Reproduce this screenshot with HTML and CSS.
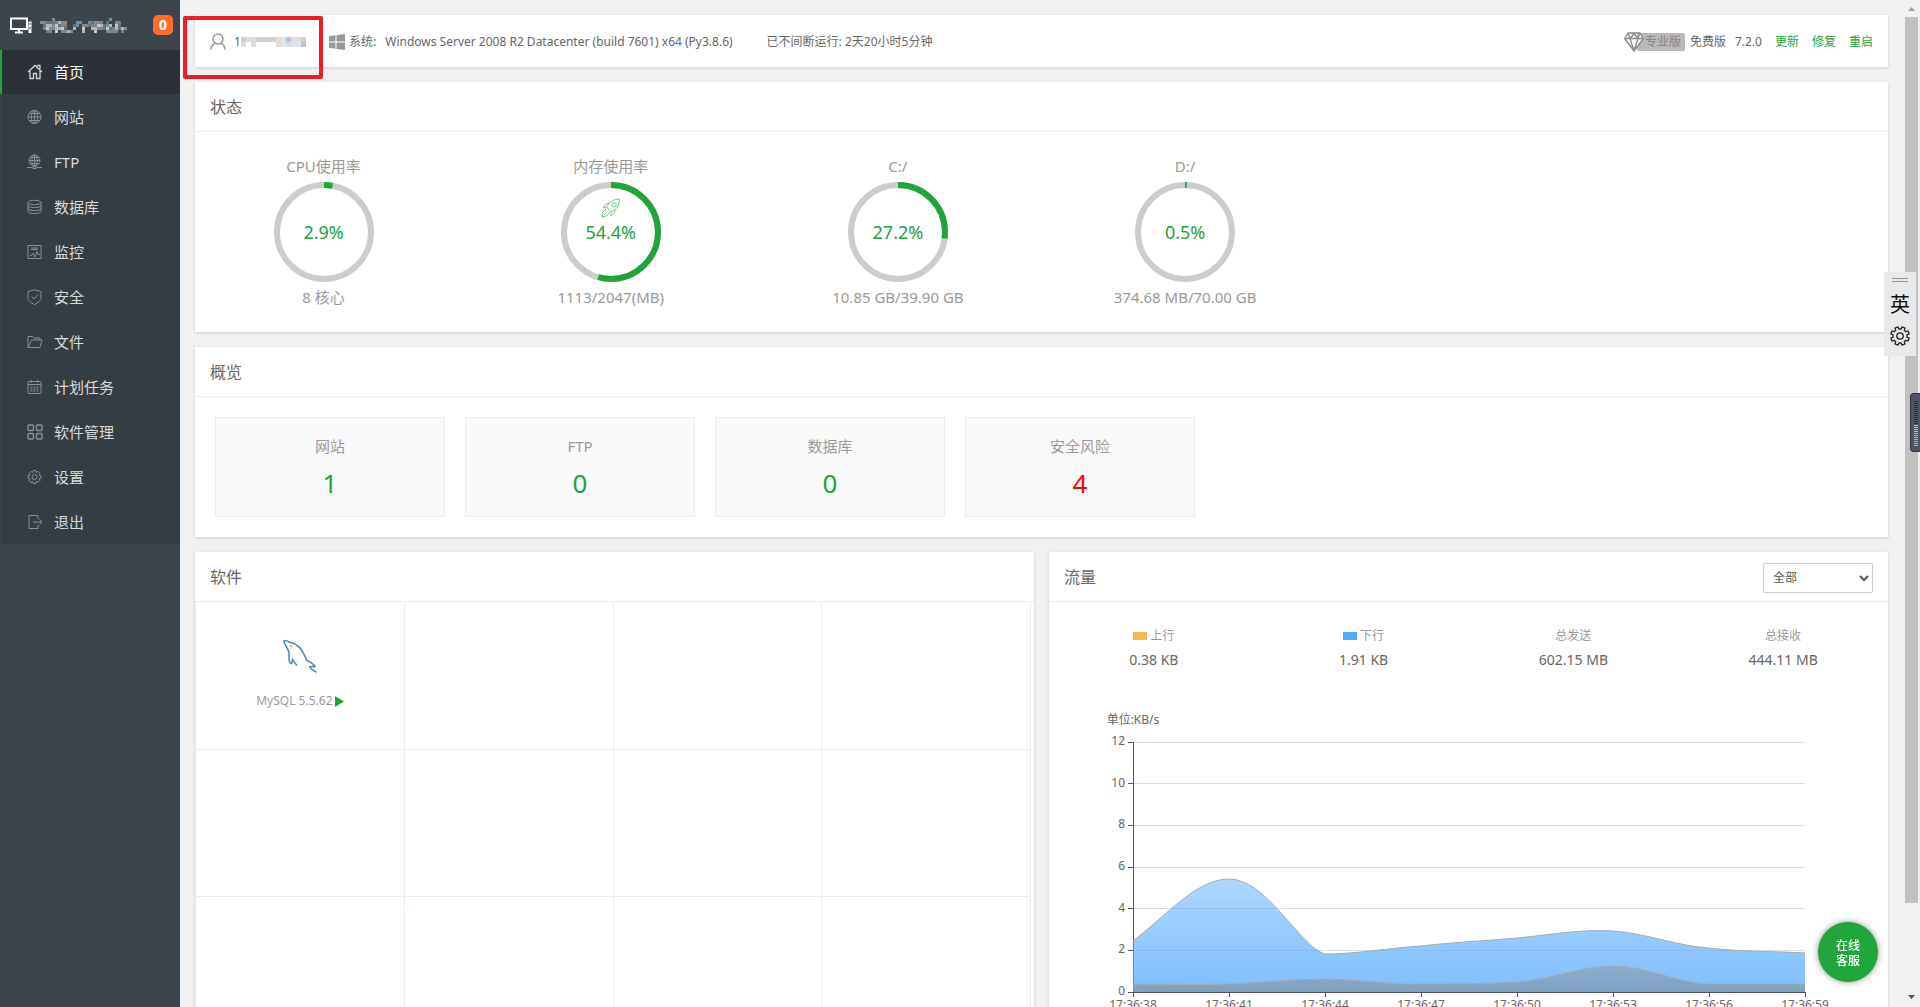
FILE: index.html
```html
<!DOCTYPE html>
<html lang="zh-CN">
<head>
<meta charset="utf-8">
<title>服务器面板</title>
<link rel="stylesheet" href="styles.css">
</head>
<body>
<div class="app">
  <aside class="sidebar">
    <div class="host">
      <svg class="host-icon" viewBox="0 0 22 17" fill="none"><path d="M1 1.500H17V12H1Z" stroke="#fff" stroke-width="2"/><path d="M5 15.500H13M9 13V15" stroke="#fff" stroke-width="2"/><path d="M18.500 4.500H21.500V16H18.500Z" fill="#fff"/><path d="M20 6V8M20 10V12" stroke="#3c444d"/></svg>
      <svg class="host-name" viewBox="0 0 29 5" fill="none" role="img" aria-label="主机">
        <path stroke="#66717a" d="M1 1.500h8M12 1.500h1M17 1.500h4M22 1.500h1M25 1.500h2M1 2.500h8M11 2.500h1M14 2.500h8M25 2.500h2M2 3.500h7M11 3.500h1M14 3.500h1M17 3.500h11"/>
        <path stroke="#7f8a93" d="M0 1.500h2M4 .5h1M7 1.500h2M12 1.500h2M18 1.500h3M23 .5h1M25 1.500h2M3 3.500h2M10 4.500h1M14 2.500h2M22 4.500h2"/>
        <path stroke="#b9b4ae" d="M2 2.500h2M6 1.500h1M5 3.500h2M9 4.500h1M11 3.500h1M14 4.500h1M17 3.500h2M20 2.500h1M23 2.500h1M25 3.500h1M27 3.500h1"/>
        <path stroke="#6d8ca0" d="M1 3.500h1M4 2.500h1M7 2.500h1M7 4.500h2M12 2.500h1M16 1.500h1M19 3.500h2M22 2.500h1M24 4.500h2M28 3.500h1"/>
        <path stroke="#8c7b72" d="M2 4.500h2M5 1.500h1M8 2.500h1M17 2.500h2M20 1.500h1M24 3.500h1M26 1.500h1M27 4.500h1"/>
        <path stroke="#c6c9c9" d="M2 3.500h1M5 2.500h1M7 3.500h1M14 3.500h1M19 2.500h1M22 3.500h1M25 2.500h1M5 4.500h1M18 4.500h1"/>
      </svg>
      <span class="badge">0</span>
    </div>
    <nav class="menu">
      <a class="item active" href="#"><svg viewBox="0 0 16 16"><path d="M1 8 8 1.500 15 8M3 7V14.500H6.500V9.500H9.500V14.500H13V7M10 1.500H13V5"/></svg>首页</a>
      <a class="item" href="#"><svg viewBox="0 0 16 16"><circle cx="7.500" cy="8" r="6.500"/><ellipse cx="7.500" cy="8" rx="3.200" ry="6.500"/><path d="M7.500 1.500V14.500M1 8H14M2 4.500H13M2 11.500H13"/></svg>网站</a>
      <a class="item" href="#"><svg viewBox="0 0 16 16"><circle cx="7.500" cy="6.500" r="5.500"/><ellipse cx="7.500" cy="6.500" rx="2.700" ry="5.500"/><path d="M7.500 1V13M2 6.500H13M3 3.500H12M3 9.500H12M0 13.500H5.500M9.500 13.500H15M6 12.500H9V14.500H6Z"/></svg>FTP</a>
      <a class="item" href="#"><svg viewBox="0 0 16 16"><ellipse cx="7.500" cy="3.500" rx="6.500" ry="2.200"/><path d="M1 3.500V12.500C1 15.300 14 15.300 14 12.500V3.500M1 6.500C1 9.300 14 9.300 14 6.500M1 9.500C1 12.300 14 12.300 14 9.500"/></svg>数据库</a>
      <a class="item" href="#"><svg viewBox="0 0 16 16"><path d="M1 1.500H14V14.500H1ZM4 4H11M4 5.500H11M3 11.500H4.500L6 9 8 13 10 7.500 11 10.500H13"/></svg>监控</a>
      <a class="item" href="#"><svg viewBox="0 0 16 16"><path d="M7.500 .8 14 2.500V8.500C14 11.500 11 14 7.500 15.500 4 14 1 11.500 1 8.500V2.500ZM4.500 7.500 7 10 11 5.500"/></svg>安全</a>
      <a class="item" href="#"><svg viewBox="0 0 16 16"><path d="M1 13.500V2.500H5.500L7 4H13V6M1 13.500H13L15 6H4.500L1.500 13"/></svg>文件</a>
      <a class="item" href="#"><svg viewBox="0 0 16 16"><rect x="1" y="2.500" width="13" height="12" rx="1"/><path d="M1 5.500H14M4.500 1V3.500M10.500 1V3.500"/><path stroke-dasharray="2 1" d="M3.500 8H12M3.500 10H12M3.500 12H12"/></svg>计划任务</a>
      <a class="item" href="#"><svg viewBox="0 0 16 16" class="bold"><rect x="1" y="1" width="5.500" height="5.500" rx="1"/><rect x="9.500" y="1" width="5.500" height="5.500" rx="1"/><rect x="1" y="9.500" width="5.500" height="5.500" rx="1"/><rect x="9.500" y="9.500" width="5.500" height="5.500" rx="1"/></svg>软件管理</a>
      <a class="item" href="#"><svg viewBox="0 0 16 16"><circle cx="7.500" cy="8" r="2.500"/><path d="M6.300 1.500H8.700L9.200 3.400 11 2.500 12.900 4.500 12 6.200 14 6.800V9.200L12 9.800 12.900 11.500 11 13.500 9.200 12.600 8.700 14.500H6.300L5.800 12.600 4 13.500 2.100 11.500 3 9.800 1 9.200V6.800L3 6.200 2.100 4.500 4 2.500 5.800 3.400Z"/></svg>设置</a>
      <a class="item" href="#"><svg viewBox="0 0 16 16"><path d="M11 5V1.500H2V14.500H11V11M6 8H15M12.500 5.500 15 8 12.500 10.500"/></svg>退出</a>
    </nav>
  </aside>

  <main class="main">
    <header class="card topbar">
      <svg class="user-icon" viewBox="0 0 16 17" fill="none" stroke="#999" stroke-width="1.500"><circle cx="8" cy="6" r="5"/><path d="M1 16.500C1.200 13 3 11 5.500 10.300M10.500 10.300C13 11 14.800 13 15 16.500"/></svg>
      <span class="account">1<svg viewBox="0 0 13 2" role="img" aria-label="账号"><path stroke="#cfcfd4" d="M0 .5h1M3 .5h4M9 .5h1M12 .5h1"/><path stroke="#dcdde0" d="M1 .5h1M0 1.500h1M2 1.500h1M10 .5h1M9 1.500h1"/><path stroke="#e8dccd" d="M2 .5h1M7 .5h1M11 .5h1M7 1.500h1"/><path stroke="#b9c4d0" d="M9 .5h1M12 1.500h1"/><path stroke="#dfe5ec" d="M8 .5h1M8 1.500h1M10 1.500h2"/></svg></span>
      <svg class="win-icon" viewBox="0 0 16 16" fill="#999"><path d="M0 2.200 6.500 1.300V7.600H0ZM7.500 1.200 16 0V7.600H7.500ZM0 8.500H6.500V14.800L0 13.900ZM7.500 8.500H16V16L7.500 14.900Z"/></svg>
      <span class="sys-label">系统:</span>
      <span class="sys">Windows Server 2008 R2 Datacenter (build 7601) x64 (Py3.8.6)</span>
      <span>已不间断运行: 2天20小时5分钟</span>
      <span class="version">
        <a class="pro" href="#"><svg viewBox="0 0 20 20"><path fill="#fff" stroke="#8c8c8c" stroke-width="1.400" stroke-linejoin="round" d="M4 1H16L19.300 6.500 10 19 .7 6.500ZM.7 6.500H19.300M4 1 6 6.500 10 19 14 6.500 16 1M6 6.500 10 1.500 14 6.500"/></svg><span>专业版</span></a>
        <span class="edition">免费版</span>
        <span class="number">7.2.0</span>
        <a href="#">更新</a><a href="#">修复</a><a href="#">重启</a>
      </span>
    </header>

    <section class="card">
      <h2>状态</h2>
      <ul class="gauges">
        <li><span>CPU使用率</span><div class="ring"><svg viewBox="0 0 100 100"><circle cx="50" cy="50" r="47"/><circle class="used" cx="50" cy="50" r="47" pathLength="100" stroke-dasharray="2.900 100"/></svg><b>2.9%</b></div><span>8 核心</span></li>
        <li><span>内存使用率</span><div class="ring"><svg viewBox="0 0 100 100"><circle cx="50" cy="50" r="47"/><circle class="used" cx="50" cy="50" r="47" pathLength="100" stroke-dasharray="54.400 100"/></svg><svg class="rocket" viewBox="0 0 20 20"><path d="M18.500 1C13 1 8 4 5.500 9L10.500 14C15.500 11.500 18.500 7 18.500 1ZM8 5.500C4.500 5 3 7.500 2.500 10L5.500 9M14 11.500C14.500 15 12 17 9.500 17.500L10.500 14M5 11C2 12 1.500 15.500 1 19 4.500 18.500 7.500 17.500 8.500 14.500M3 17 6 14"/><circle cx="13" cy="6.800" r="2.200"/></svg><b>54.4%</b></div><span>1113/2047(MB)</span></li>
        <li><span>C:/</span><div class="ring"><svg viewBox="0 0 100 100"><circle cx="50" cy="50" r="47"/><circle class="used" cx="50" cy="50" r="47" pathLength="100" stroke-dasharray="27.200 100"/></svg><b>27.2%</b></div><span>10.85 GB/39.90 GB</span></li>
        <li><span>D:/</span><div class="ring"><svg viewBox="0 0 100 100"><circle cx="50" cy="50" r="47"/><circle class="used" cx="50" cy="50" r="47" pathLength="100" stroke-dasharray="0.600 100"/></svg><b>0.5%</b></div><span>374.68 MB/70.00 GB</span></li>
      </ul>
    </section>

    <section class="card">
      <h2>概览</h2>
      <ul class="overview">
        <li><span>网站</span><a href="#">1</a></li>
        <li><span>FTP</span><a href="#">0</a></li>
        <li><span>数据库</span><a href="#">0</a></li>
        <li><span>安全风险</span><a class="risk" href="#">4</a></li>
      </ul>
    </section>

    <div class="columns">
      <section class="card">
        <h2>软件</h2>
        <div class="apps">
          <div class="app-cell">
            <svg class="mysql" viewBox="0 0 34 34" fill="none" stroke="#4589ab" stroke-width="1.500" stroke-linejoin="round" stroke-linecap="round"><path d="M33 33C31 31 27.500 30 26.500 28 28 27 30.500 28 32 27.500 31 25 27 23 24 21.500 21.500 17.500 20 10 13.500 6 10.500 3.500 8 4 6 3 4 1.500 1 1 1 2.500 1 5 4 8 5 11 7 14 5.500 17 6 20 6.200 23 7.500 25 8.500 24.500 9.500 23 9 21.500 9.500 20 10.500 22 12 24 13.500 26"/><path d="M7.500 6.500 8.500 8" stroke-width="1"/></svg>
            <span>MySQL 5.5.62<svg class="play" viewBox="0 0 9 11"><path d="M0 0 9 5.500 0 11Z" fill="#20a53a"/></svg></span>
          </div>
          <div class="app-cell"></div><div class="app-cell"></div><div class="app-cell"></div>
          <div class="app-cell"></div><div class="app-cell"></div><div class="app-cell"></div><div class="app-cell"></div>
          <div class="app-cell"></div><div class="app-cell"></div><div class="app-cell"></div><div class="app-cell"></div>
        </div>
      </section>

      <section class="card">
        <div class="card-head"><h2>流量</h2><select aria-label="网卡"><option>全部</option></select></div>
        <ul class="traffic">
          <li><span><i class="up"></i>上行</span><b>0.38 KB</b></li>
          <li><span><i class="down"></i>下行</span><b>1.91 KB</b></li>
          <li><span>总发送</span><b>602.15 MB</b></li>
          <li><span>总接收</span><b>444.11 MB</b></li>
        </ul>
        <svg class="chart" viewBox="0 0 839 330">
          <defs>
            <linearGradient id="blue" x1="0" y1="0" x2="0" y2="1"><stop offset="0" stop-color="#52a9ff" stop-opacity=".47"/><stop offset="1" stop-color="#52a9ff" stop-opacity=".75"/></linearGradient>
            <linearGradient id="amber" x1="0" y1="0" x2="0" y2="1"><stop offset="0" stop-color="#8a9aa0" stop-opacity=".5"/><stop offset="1" stop-color="#7d8c96" stop-opacity=".6"/></linearGradient>
          </defs>
          <g stroke="#ddd"><path d="M84 42.500H756M84 83.500H756M84 125.500H756M84 167.500H756M84 208.500H756M84 250.500H756"/></g>
          <g stroke="#555"><path d="M84.500 42V293M79 42.500H85M79 83.500H85M79 125.500H85M79 167.500H85M79 208.500H85M79 250.500H85M79 292.500H757M84.500 293V297M180.500 293V297M276.500 293V297M372.500 293V297M468.500 293V297M564.500 293V297M660.500 293V297M756.500 293V297"/></g>
          <path fill="url(#blue)" d="M84 241C116 217 147 179 180 179 218 179 250 246 276 254 308 254 340 248 372 246 404 242 436 241 468 238 500 235 532 229 564 231 596 233 628 246 660 248 692 252 724 251 756 253V292H84Z"/>
          <path fill="none" stroke="#aaa" d="M84 241C116 217 147 179 180 179 218 179 250 246 276 254 308 254 340 248 372 246 404 242 436 241 468 238 500 235 532 229 564 231 596 233 628 246 660 248 692 252 724 251 756 253"/>
          <path fill="url(#amber)" d="M84 284C116 284 148 285 180 284 212 283 244 279 276 279 308 279 340 285 372 284 404 284 436 284 468 282 500 280 532 266 564 266 596 266 634 284 660 284H756V292H84Z"/>
          <path fill="none" stroke="#aaa" d="M84 284C116 284 148 285 180 284 212 283 244 279 276 279 308 279 340 285 372 284 404 284 436 284 468 282 500 280 532 266 564 266 596 266 634 284 660 284H756"/>
          <g text-anchor="middle"><text x="84" y="24">单位:KB/s</text><text x="84" y="309">17:36:38</text><text x="180" y="309">17:36:41</text><text x="276" y="309">17:36:44</text><text x="372" y="309">17:36:47</text><text x="468" y="309">17:36:50</text><text x="564" y="309">17:36:53</text><text x="660" y="309">17:36:56</text><text x="756" y="309">17:36:59</text></g>
          <g text-anchor="end"><text x="76" y="45">12</text><text x="76" y="87">10</text><text x="76" y="128">8</text><text x="76" y="170">6</text><text x="76" y="212">4</text><text x="76" y="253">2</text><text x="76" y="295">0</text></g>
        </svg>
      </section>
    </div>
  </main>

  <div class="scrollbar" aria-hidden="true">
    <svg viewBox="0 0 7 4" fill="#a3a3a3"><path d="M0 4 3.500 0 7 4Z"/></svg>
    <div class="track"><div class="thumb"></div></div>
    <svg viewBox="0 0 7 4" fill="#505050"><path d="M0 0 3.500 4 7 0Z"/></svg>
  </div>
</div>

<div class="highlight"></div>
<div class="ime">
  <svg class="grip" viewBox="0 0 16 4" stroke="#999"><path d="M0 .5H16M0 3.500H16"/></svg>
  <span>英</span>
  <svg class="gear" viewBox="0 0 20 20" fill="none" stroke="#222" stroke-width="1.300"><circle cx="10" cy="10" r="3.200"/><path stroke-linejoin="round" d="M8 .8 8.800 3H11.200L12 .8 15 2 14.300 4.300 15.700 5.700 18 5 19.200 8 17 8.800V11.200L19.200 12 18 15 15.700 14.300 14.300 15.700 15 18 12 19.200 11.200 17H8.800L8 19.200 5 18 5.700 15.700 4.300 14.300 2 15 .8 12 3 11.200V8.800L.8 8 2 5 4.300 5.700 5.700 4.300 5 2Z"/></svg>
</div>
<div class="meter"><i></i></div>
<button class="support" type="button">在线<br>客服</button>
</body>
</html>
```
FILE: styles.css
```css
* { box-sizing: border-box; }
body, ul, h2 { margin: 0; padding: 0; }
ul { list-style: none; }
a { color: #20a53a; text-decoration: none; }
b, i { font-weight: 400; font-style: normal; }
svg { display: block; flex: none; }
body {
  background: #f1f1f1;
  color: #666;
  font: 12px/20px "Noto Sans", "Noto Sans CJK SC", sans-serif;
  overflow: hidden;
}
.app { display: grid; grid-template-columns: 180px minmax(0, 1fr) 17px; height: 100vh; }

/* Sidebar */
.sidebar { background: #3c444d; }
.host { display: flex; align-items: center; height: 50px; padding: 0 7px 0 10px; }
.host-icon { width: 22px; height: 17px; }
.host-name { width: 87px; height: 15px; margin: 0 auto 0 8px; }
.badge {
  width: 20px; border-radius: 5px; background: #ff6e26;
  color: #fff; font-size: 14px; font-weight: 700; text-align: center;
}
.menu { display: grid; gap: 1px; background: #353d44; }
.item {
  display: flex; align-items: center; gap: 11px;
  height: 44px; padding: 0 0 1px 25px; border-left: 2px solid #3f3f3f;
  color: #d9dbdc; font-size: 15px;
}
.item svg { width: 16px; height: 16px; fill: none; stroke: #899096; }
.item .bold { stroke-width: 1.4; }
.item.active { background: #2c3138; border-color: #20a53a; color: #fff; }
.item.active svg { stroke: #d0d2d4; stroke-width: 1.3; }

/* Cards */
.main { display: flex; flex-direction: column; gap: 15px; padding: 15px; overflow: hidden; }
.card { background: #fff; box-shadow: 0 1px 3px rgba(0, 0, 0, .15); flex: none; }
h2 {
  height: 50px; padding-left: 15px; border-bottom: 1px solid #ececec;
  font-size: 16px; font-weight: 400; line-height: 50px;
}
.card-head {
  display: flex; align-items: center; justify-content: space-between;
  padding-right: 15px; border-bottom: 1px solid #ececec;
}
.card-head h2 { height: 49px; border: 0; }
select {
  width: 110px; height: 30px; margin-top: 2px; padding: 0 5px;
  border: 1px solid #ccc; border-radius: 2px; background: #fff;
  color: #555; font: inherit;
}

/* Top bar */
.topbar { display: flex; align-items: center; height: 52px; padding: 1px 15px 0; white-space: nowrap; }
.user-icon { width: 16px; height: 17px; }
.account { display: flex; align-items: center; width: 71px; margin: 0 24px 0 8px; }
.account svg { width: 65px; height: 10px; fill: none; }
.win-icon { width: 16px; height: 16px; margin-right: 4px; }
.sys-label { margin-right: 9px; }
.sys { margin-right: 34px; }
.version { display: flex; align-items: center; gap: 13px; margin-left: auto; }
.pro { display: flex; align-items: center; color: #858585; margin-right: -8px; }
.pro svg { width: 20px; height: 20px; z-index: 1; }
.pro span { margin-left: -7px; padding: 0 4px 0 8px; border-radius: 2px; background: #b9b9b9; line-height: 18px; }
.edition { margin-right: -4px; }

/* Gauges */
.gauges { display: grid; grid-template-columns: repeat(6, 1fr); margin: 0 -15px; padding: 24px 0; height: 200px; }
.gauges li { display: flex; flex-direction: column; align-items: center; color: #999; font-size: 15px; }
.ring { display: grid; place-items: center; width: 100px; height: 100px; margin: 6px 0 5px; color: #20a53a; font-size: 18px; }
.ring > * { grid-area: 1 / 1; }
.ring circle { fill: none; stroke: #ccc; stroke-width: 6; }
.ring .used { stroke: #20a53a; transform: rotate(-90deg); transform-origin: center; }
.ring .rocket { width: 20px; height: 20px; align-self: start; margin-top: 16px; fill: none; stroke: #6cc57d; }
.ring .rocket circle { stroke: #6cc57d; stroke-width: 1; }

/* Overview */
.overview { display: grid; grid-template-columns: repeat(4, 230px); gap: 20px; padding: 20px; }
.overview li {
  display: flex; flex-direction: column; align-items: center; gap: 9px;
  height: 100px; padding-top: 18px; border: 1px solid #ececec; background: #f9f9f9;
  color: #999; font-size: 15px;
}
.overview a { font-size: 26px; line-height: 36px; }
.overview .risk { color: #f00; }

/* Software and traffic */
.columns { display: grid; grid-template-columns: 1fr 1fr; gap: 15px; flex: none; }
.apps { display: grid; grid-template-columns: repeat(4, 1fr); grid-auto-rows: 147px; margin-right: 3px; padding-top: 1px; border-left: 1px solid #ebe9f7; }
.app-cell {
  display: flex; flex-direction: column; align-items: center; gap: 18px;
  padding-top: 36px; border: solid #ebe9f7; border-width: 0 1px 1px 0; color: #999;
}
.mysql { width: 34px; height: 34px; }
.app-cell span { display: flex; align-items: center; gap: 2px; }
.play { width: 9px; height: 11px; }
.traffic { display: grid; grid-template-columns: repeat(4, 1fr); padding: 24px 0 30px; }
.traffic li { display: flex; flex-direction: column; align-items: center; gap: 4px; }
.traffic span { display: flex; align-items: center; gap: 3px; color: #999; }
.traffic i { width: 14px; height: 8px; }
.traffic b { font-size: 14px; }
.up { background: #f7b851; }
.down { background: #52a9ff; }
.chart { width: 100%; height: auto; font-size: 12px; fill: #666; }

/* Scrollbar */
.scrollbar { display: flex; flex-direction: column; align-items: center; padding: 7px 2px 8px; }
.scrollbar svg { width: 7px; height: 4px; }
.track { flex: 1; align-self: stretch; margin: 6px 0 4px; }
.thumb { height: 91%; background: #c1c1c1; }

/* Overlays */
.highlight { position: absolute; left: 183px; top: 16px; width: 140px; height: 63px; border: 4px solid #ee1c25; border-radius: 2px; }
.ime {
  position: fixed; right: 4px; top: 272px; width: 32px; height: 84px; padding-top: 6px;
  display: flex; flex-direction: column; align-items: center; gap: 8px;
  background: #e9e9e9; color: #111; font-size: 20px; line-height: 30px;
}
.grip { width: 16px; height: 4px; }
.gear { width: 20px; height: 20px; margin-top: -2px; }
.meter {
  position: fixed; right: 0; top: 393px; width: 10px; height: 59px; padding: 7px 2px 7px 3px;
  border: 1px solid #30343d; border-right: 0; border-radius: 4px 0 0 4px; background: #4d5464;
}
.meter i {
  display: block; height: 45px;
  background:
    repeating-linear-gradient(transparent 0 1px, #4d5464 1px 2px),
    linear-gradient(#2c3038 0 52%, #c5e05a 52%, #7fdc8a 75%, #40e0d0);
}
.support {
  position: fixed; right: 42px; bottom: 25px; width: 60px; height: 60px; padding: 2px 0 0;
  border: 0; border-radius: 50%; background: #20a53a; box-shadow: 0 0 6px rgba(0, 0, 0, .45);
  color: #fff; font: 500 12px/15px "Noto Sans", "Noto Sans CJK SC", sans-serif;
}
```
